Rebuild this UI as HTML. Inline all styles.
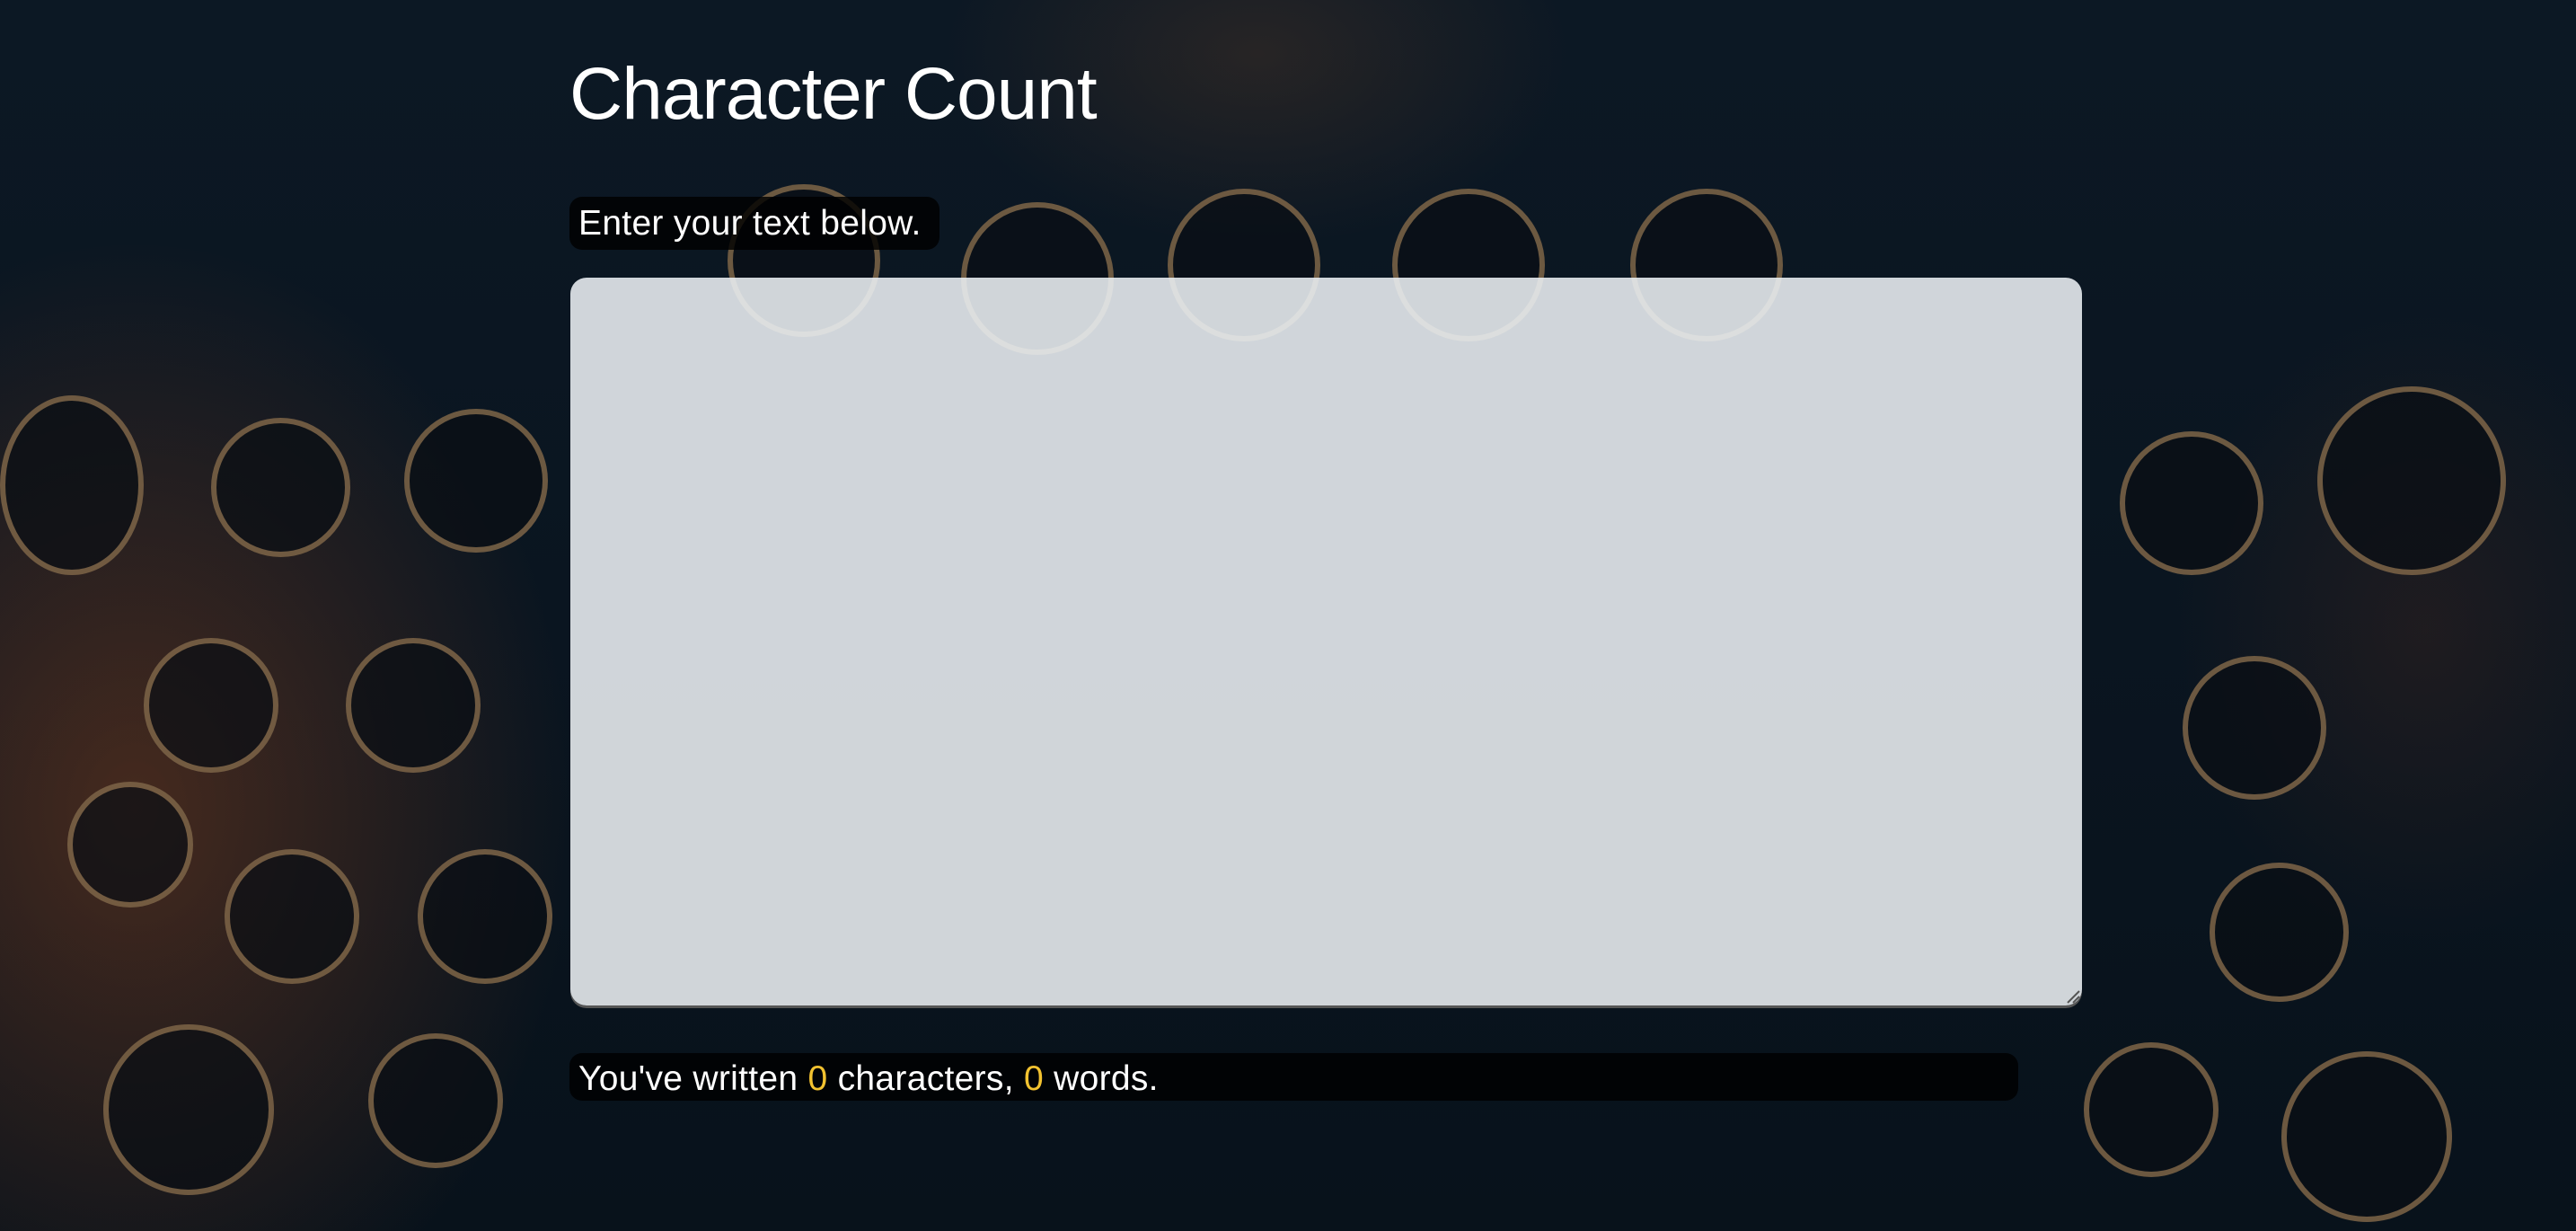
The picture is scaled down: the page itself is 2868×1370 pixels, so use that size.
<!DOCTYPE html>
<html><head><meta charset="utf-8"><style>
html,body{margin:0;padding:0;}
body{width:2868px;height:1370px;overflow:hidden;position:relative;font-family:"Liberation Sans","DejaVu Sans",sans-serif;
background:
radial-gradient(ellipse 700px 900px at 150px 900px, rgba(120,60,30,0.55), transparent 70%),
radial-gradient(ellipse 500px 300px at 1400px 60px, rgba(90,60,40,0.35), transparent 70%),
radial-gradient(ellipse 400px 500px at 2700px 700px, rgba(70,40,30,0.35), transparent 70%),
linear-gradient(180deg,#0c1824 0%,#0a1520 50%,#08121b 100%);}
.key{position:absolute;border-radius:50%;border:6px solid rgba(190,150,100,0.55);background:rgba(10,14,20,0.7);box-sizing:border-box;}
h1{position:absolute;left:634px;top:58px;margin:0;font-weight:normal;color:#fff;font-size:82px;letter-spacing:-1px;}
.label{position:absolute;left:634px;top:219px;height:59px;width:412px;background:rgba(0,0,0,0.82);border-radius:14px;color:#fff;font-size:39px;line-height:59px;padding-left:10px;box-sizing:border-box;letter-spacing:0.3px;}
.ta{position:absolute;left:635px;top:309px;width:1683px;height:810px;background:rgba(236,240,244,0.88);border-radius:18px;box-shadow:0 3px 0 #555;}
.ta svg{position:absolute;right:2px;bottom:2px;}
.out{position:absolute;left:634px;top:1172px;width:1613px;height:53px;background:rgba(0,0,0,0.8);border-radius:14px;color:#fff;font-size:39px;line-height:58px;padding-left:10px;box-sizing:border-box;letter-spacing:0.3px;}
.y{color:#f2c230;}
</style></head><body>
<div class="key" style="left:0;top:440px;width:160px;height:200px"></div>
<div class="key" style="left:235px;top:465px;width:155px;height:155px"></div>
<div class="key" style="left:450px;top:455px;width:160px;height:160px"></div>
<div class="key" style="left:160px;top:710px;width:150px;height:150px"></div>
<div class="key" style="left:385px;top:710px;width:150px;height:150px"></div>
<div class="key" style="left:75px;top:870px;width:140px;height:140px"></div>
<div class="key" style="left:250px;top:945px;width:150px;height:150px"></div>
<div class="key" style="left:465px;top:945px;width:150px;height:150px"></div>
<div class="key" style="left:115px;top:1140px;width:190px;height:190px"></div>
<div class="key" style="left:410px;top:1150px;width:150px;height:150px"></div>
<div class="key" style="left:2360px;top:480px;width:160px;height:160px"></div>
<div class="key" style="left:2580px;top:430px;width:210px;height:210px"></div>
<div class="key" style="left:2430px;top:730px;width:160px;height:160px"></div>
<div class="key" style="left:2460px;top:960px;width:155px;height:155px"></div>
<div class="key" style="left:2320px;top:1160px;width:150px;height:150px"></div>
<div class="key" style="left:2540px;top:1170px;width:190px;height:190px"></div>
<div class="key" style="left:1070px;top:225px;width:170px;height:170px"></div>
<div class="key" style="left:1300px;top:210px;width:170px;height:170px"></div>
<div class="key" style="left:1550px;top:210px;width:170px;height:170px"></div>
<div class="key" style="left:1815px;top:210px;width:170px;height:170px"></div>
<div class="key" style="left:810px;top:205px;width:170px;height:170px"></div>
<h1>Character Count</h1>
<div class="label">Enter your text below.</div>
<div class="ta"><svg width="16" height="16"><path d="M2 15L15 2M8 15L15 8" stroke="#555" stroke-width="2"/></svg></div>
<div class="out">You've written <span class="y">0</span> characters, <span class="y">0</span> words.</div>
</body></html>
